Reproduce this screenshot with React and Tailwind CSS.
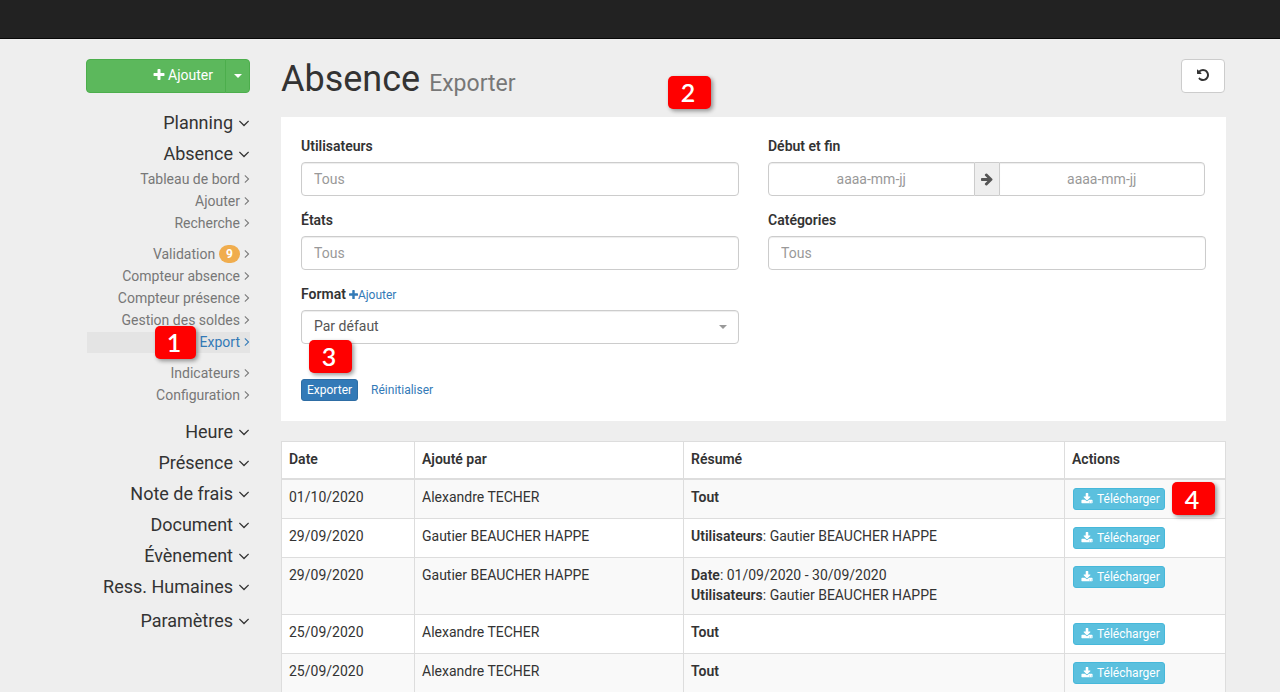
const PATHS = {
  plus: 'M1600 736v192q0 40-28 68t-68 28h-416v416q0 40-28 68t-68 28h-192q-40 0-68-28t-28-68v-416h-416q-40 0-68-28t-28-68v-192q0-40 28-68t68-28h416v-416q0-40 28-68t68-28h192q40 0 68 28t28 68v416h416q40 0 68 28t28 68z',
  angleDown: 'M1395 736q0 13-10 23l-466 466q-10 10-23 10t-23-10l-466-466q-10-10-10-23t10-23l50-50q10-10 23-10t23 10l393 393 393-393q10-10 23-10t23 10l50 50q10 10 10 23z',
  angleRight: 'M1171 960q0 13-10 23l-466 466q-10 10-23 10t-23-10l-50-50q-10-10-10-23t10-23l393-393-393-393q-10-10-10-23t10-23l50-50q10-10 23-10t23 10l466 466q10 10 10 23z',
  arrowRight: 'M1600 960q0 54-37 91l-651 651q-39 37-91 37-51 0-90-37l-75-75q-38-38-38-91t38-91l293-293h-704q-52 0-84.5-37.5t-32.5-90.5v-128q0-53 32.5-90.5t84.5-37.5h704l-293-294q-38-36-38-90t38-90l75-75q38-38 90-38 53 0 91 38l651 651q37 35 37 90z',
  download: 'M1344 1344q0-26-19-45t-45-19-45 19-19 45 19 45 45 19 45-19 19-45zm256 0q0-26-19-45t-45-19-45 19-19 45 19 45 45 19 45-19 19-45zm128-224v320q0 40-28 68t-68 28h-1472q-40 0-68-28t-28-68v-320q0-40 28-68t68-28h465l135 136q58 56 136 56t136-56l136-136h464q40 0 68 28t28 68zm-325-569q17 41-14 70l-448 448q-18 19-45 19t-45-19l-448-448q-31-29-14-70 17-39 59-39h256v-448q0-26 19-45t45-19h256q26 0 45 19t19 45v448h256q42 0 59 39z',
  undo: 'M1664 896q0 156-61 298t-164 245-245 164-298 61q-172 0-327-72.5t-264-204.5q-7-10-6.5-22.5t8.5-20.5l137-138q10-9 25-9 16 2 23 12 73 95 179 147t225 52q104 0 198.5-40.5t163.5-109.5 109.5-163.5 40.5-198.5-40.5-198.5-109.5-163.5-163.5-109.5-198.5-40.5q-98 0-188 35.5t-160 101.5l137 138q31 30 14 69-17 40-59 40h-448q-26 0-45-19t-19-45v-448q0-42 40-59 39-17 69 14l130 129q107-101 244.5-156.5t284.5-55.5q156 0 298 61t245 164 164 245 61 298z',
};

function Icon({ name, className, viewBox = '0 0 1792 1792' }) {
  return (
    <svg aria-hidden="true" viewBox={viewBox} fill="currentColor" className={className}>
      <path d={PATHS[name]} />
    </svg>
  );
}

function Caret({ className }) {
  return (
    <svg aria-hidden="true" viewBox="0 0 8 4" fill="currentColor" className={className}>
      <path d="M0 0h8L4 4z" />
    </svg>
  );
}

function Marker({ n, className }) {
  return (
    <span
      className={`absolute z-10 flex h-[33px] items-center justify-center rounded-[5px] bg-[#ff0000] pr-[3px] font-[Lato,sans-serif] text-[25px] font-semibold text-white shadow-[2px_2px_4px_rgba(0,0,0,0.4)] ${className}`}
    >
      {n}
    </span>
  );
}

function Section({ label, className = '' }) {
  return (
    <a href="#" className={`flex h-[31px] items-center justify-end gap-[5px] text-lg text-[#333] ${className}`}>
      {label}
      <Icon name="angleDown" viewBox="320 0 1152 1792" className="h-[18px] w-3" />
    </a>
  );
}

const GROUPS = [
  [{ label: 'Tableau de bord' }, { label: 'Ajouter' }, { label: 'Recherche' }],
  [
    { label: 'Validation', badge: 9 },
    { label: 'Compteur absence' },
    { label: 'Compteur présence' },
    { label: 'Gestion des soldes' },
    { label: 'Export', active: true },
  ],
  [{ label: 'Indicateurs' }, { label: 'Configuration' }],
];

function SubItem({ label, badge, active }) {
  return (
    <li className="relative mb-px ml-px">
      <a
        href="#"
        className={`flex h-[21px] items-center justify-end gap-1 pb-[2px] text-sm ${
          active ? 'bg-[#e4e4e4] text-[#337ab7]' : 'text-[#777]'
        }`}
      >
        {label}
        {badge && (
          <span className="rounded-[10px] bg-[#f0ad4e] px-[7px] py-[3px] text-xs leading-3 font-bold text-white">
            {badge}
          </span>
        )}
        <Icon name="angleRight" viewBox="512 64 768 1792" className="h-[14px] w-[6px]" />
      </a>
      {active && <Marker n="1" className="-top-[6px] right-[54px] w-[41px]" />}
    </li>
  );
}

function Sidebar() {
  return (
    <aside className="w-[164px] shrink-0">
      <div className="mb-[14px] flex text-sm text-white">
        <button
          type="button"
          className="flex h-[34px] flex-1 items-center justify-end gap-[2px] rounded-l border border-[#4cae4c] bg-[#5cb85c] px-3 pb-[2px]"
        >
          <Icon name="plus" className="size-[14px]" />
          Ajouter
        </button>
        <button
          type="button"
          aria-label="Plus d'actions"
          className="-ml-px flex h-[34px] w-[25px] items-center justify-center rounded-r border border-[#4cae4c] bg-[#5cb85c]"
        >
          <Caret className="h-1 w-2" />
        </button>
      </div>
      <nav>
        <Section label="Planning" />
        <Section label="Absence" />
        <div className="mb-[9px] flex flex-col gap-[9px]">
          {GROUPS.map((items, i) => (
            <ul key={i}>
              {items.map((item) => (
                <SubItem key={item.label} {...item} />
              ))}
            </ul>
          ))}
        </div>
        {['Heure', 'Présence', 'Note de frais', 'Document', 'Évènement', 'Ress. Humaines'].map((label) => (
          <Section key={label} label={label} />
        ))}
        <Section label="Paramètres" className="mt-[3px]" />
      </nav>
    </aside>
  );
}

const FIELD =
  'h-[34px] w-full rounded border border-[#ccc] bg-white px-3 text-sm text-[#555] shadow-[inset_0_1px_1px_rgba(0,0,0,0.075)] placeholder:text-[#999]';
const DATE =
  'h-[34px] min-w-0 flex-1 border border-[#ccc] bg-white px-3 text-center text-sm text-[#555] shadow-[inset_0_1px_1px_rgba(0,0,0,0.075)] placeholder:text-[#999]';
const LABEL = 'mb-[6px] block text-sm leading-5 font-semibold';

function TextField({ id, label }) {
  return (
    <div>
      <label htmlFor={id} className={LABEL}>
        {label}
      </label>
      <input id={id} type="text" placeholder="Tous" className={FIELD} />
    </div>
  );
}

function ExportForm() {
  return (
    <form className="mb-5 bg-white px-5 pt-[19px] pb-5" onSubmit={(e) => e.preventDefault()}>
      <div className="grid grid-cols-2 gap-x-[29px] gap-y-[14px]">
        <TextField id="users" label="Utilisateurs" />
        <div>
          <label htmlFor="start" className={LABEL}>
            Début et fin
          </label>
          <div className="flex pr-px">
            <input id="start" type="text" placeholder="aaaa-mm-jj" className={`rounded-l ${DATE}`} />
            <span className="flex w-6 items-center justify-center border-y border-[#ccc] bg-[#eee] text-[#555]">
              <Icon name="arrowRight" className="size-[14px]" />
            </span>
            <input type="text" aria-label="Fin" placeholder="aaaa-mm-jj" className={`rounded-r ${DATE}`} />
          </div>
        </div>
        <TextField id="states" label="États" />
        <TextField id="categories" label="Catégories" />
        <div>
          <div className="mb-[6px] flex items-end gap-[3px] text-sm leading-5">
            <label htmlFor="format" className="font-semibold">
              Format
            </label>
            <a href="#" className="flex items-center text-xs leading-[18px] text-[#337ab7]">
              <Icon name="plus" viewBox="192 0 1408 1792" className="h-3 w-[9px]" />
              Ajouter
            </a>
          </div>
          <div className="relative">
            <select id="format" className={`appearance-none pb-[2px] ${FIELD}`}>
              <option>Par défaut</option>
            </select>
            <Caret className="pointer-events-none absolute top-[15px] right-3 h-1 w-2 text-[#999]" />
          </div>
        </div>
      </div>
      <div className="relative mt-[35px] flex items-center gap-[7px] text-xs">
        <button type="submit" className="h-[22px] rounded-[3px] border border-[#2e6da4] bg-[#337ab7] px-[5px] text-white">
          Exporter
        </button>
        <button type="reset" className="h-[22px] px-[6px] text-[#337ab7]">
          Réinitialiser
        </button>
        <Marker n="3" className="-top-[39px] left-2 w-[43px]" />
      </div>
    </form>
  );
}

const ROWS = [
  { date: '01/10/2020', by: 'Alexandre TECHER', summary: [['Tout']], marker: true },
  { date: '29/09/2020', by: 'Gautier BEAUCHER HAPPE', summary: [['Utilisateurs', 'Gautier BEAUCHER HAPPE']] },
  {
    date: '29/09/2020',
    by: 'Gautier BEAUCHER HAPPE',
    summary: [
      ['Date', '01/09/2020 - 30/09/2020'],
      ['Utilisateurs', 'Gautier BEAUCHER HAPPE'],
    ],
  },
  { date: '25/09/2020', by: 'Alexandre TECHER', summary: [['Tout']] },
  { date: '25/09/2020', by: 'Alexandre TECHER', summary: [['Tout']] },
];

const CELL = 'border border-[#ddd] px-[7px] pt-[7px] pb-[9px] align-top';

function ExportTable() {
  return (
    <table className="w-full table-fixed border-collapse bg-white text-left text-sm leading-5">
      <colgroup>
        <col className="w-[133px]" />
        <col className="w-[269px]" />
        <col />
        <col className="w-[161px]" />
      </colgroup>
      <thead>
        <tr>
          {['Date', 'Ajouté par', 'Résumé', 'Actions'].map((h) => (
            <th key={h} className="border border-b-2 border-[#ddd] px-[7px] pt-[7px] pb-[9px] font-semibold">
              {h}
            </th>
          ))}
        </tr>
      </thead>
      <tbody>
        {ROWS.map((row, i) => (
          <tr key={i} className="odd:bg-[#f9f9f9]">
            <td className={CELL}>{row.date}</td>
            <td className={CELL}>{row.by}</td>
            <td className={CELL}>
              {row.summary.map(([key, value]) => (
                <div key={key}>
                  <b className="font-semibold">{key}</b>
                  {value && `: ${value}`}
                </div>
              ))}
            </td>
            <td className="border border-[#ddd] p-2 align-top">
              <div className="relative">
                <button
                  type="button"
                  className="flex h-[22px] items-center gap-1 rounded-[3px] border border-[#46b8da] bg-[#5bc0de] pr-1 pl-[7px] text-xs text-white"
                >
                  <Icon name="download" className="size-3" />
                  Télécharger
                </button>
                {row.marker && <Marker n="4" className="-top-[6px] left-[99px] w-[43px]" />}
              </div>
            </td>
          </tr>
        ))}
      </tbody>
    </table>
  );
}

export default function App() {
  return (
    <div className="h-screen overflow-hidden bg-[#eee] font-[Roboto,sans-serif] text-[#333]">
      <header className="h-[39px] border-b border-[#080808] bg-[#222]" />
      <div className="flex gap-[31px] pt-5 pr-[54px] pl-[86px]">
        <Sidebar />
        <main className="min-w-0 flex-1">
          <div className="relative mb-[18px] flex items-start justify-between pr-px">
            <h1 className="text-4xl leading-10">
              Absence <small className="text-[23px] leading-7 text-[#777]">Exporter</small>
            </h1>
            <Marker n="2" className="top-[17px] left-[387px] w-[43px]" />
            <button
              type="button"
              aria-label="Actualiser"
              className="flex h-[34px] w-11 items-center justify-center rounded border border-[#ccc] bg-white pb-[2px] text-[#333]"
            >
              <Icon name="undo" className="size-[14px]" />
            </button>
          </div>
          <ExportForm />
          <ExportTable />
        </main>
      </div>
    </div>
  );
}
